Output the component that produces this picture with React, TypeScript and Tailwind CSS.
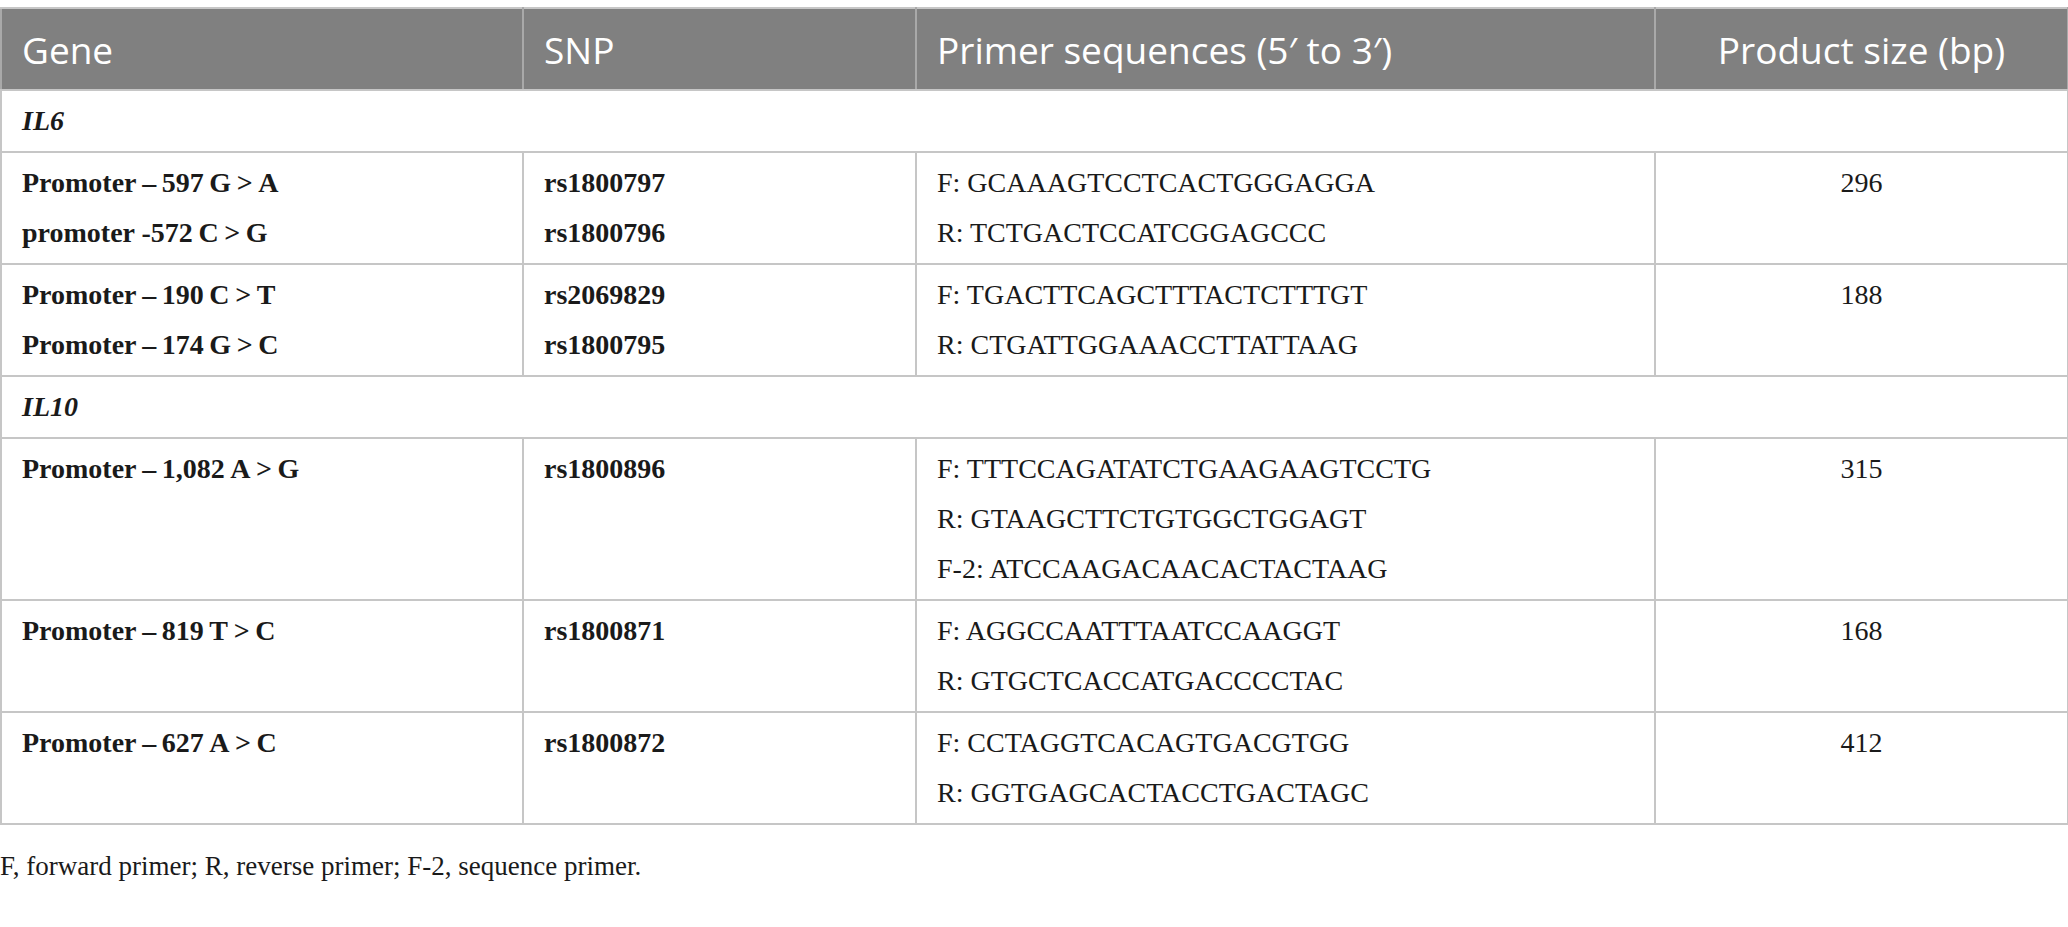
import React from "react";

const serif = "font-['Liberation_Serif','Times_New_Roman',serif]";

type Row = { gene: string[]; snp: string[]; primers: string[]; size: string };

const T = "\u2009";

const il6: Row[] = [
  {
    gene: [`Promoter${T}–${T}597${T}G${T}>${T}A`, `promoter -572${T}C${T}>${T}G`],
    snp: ["rs1800797", "rs1800796"],
    primers: ["F: GCAAAGTCCTCACTGGGAGGA", "R: TCTGACTCCATCGGAGCCC"],
    size: "296",
  },
  {
    gene: [`Promoter${T}–${T}190${T}C${T}>${T}T`, `Promoter${T}–${T}174${T}G${T}>${T}C`],
    snp: ["rs2069829", "rs1800795"],
    primers: ["F: TGACTTCAGCTTTACTCTTTGT", "R: CTGATTGGAAACCTTATTAAG"],
    size: "188",
  },
];

const il10: Row[] = [
  {
    gene: [`Promoter${T}–${T}1,082 A${T}>${T}G`],
    snp: ["rs1800896"],
    primers: ["F: TTTCCAGATATCTGAAGAAGTCCTG", "R: GTAAGCTTCTGTGGCTGGAGT", "F-2: ATCCAAGACAACACTACTAAG"],
    size: "315",
  },
  {
    gene: [`Promoter${T}–${T}819${T}T${T}>${T}C`],
    snp: ["rs1800871"],
    primers: ["F: AGGCCAATTTAATCCAAGGT", "R: GTGCTCACCATGACCCCTAC"],
    size: "168",
  },
  {
    gene: [`Promoter${T}–${T}627 A${T}>${T}C`],
    snp: ["rs1800872"],
    primers: ["F: CCTAGGTCACAGTGACGTGG", "R: GGTGAGCACTACCTGACTAGC"],
    size: "412",
  },
];

function Lines({ items }: { items: string[] }) {
  return (
    <>
      {items.map((t, i) => (
        <div key={i} className="whitespace-nowrap">
          {t}
        </div>
      ))}
    </>
  );
}

function DataRow({ r }: { r: Row }) {
  const td = "border-2 border-[#c6c6c6] align-top px-[20px] py-[5px]";
  return (
    <tr>
      <td className={`${td} font-bold`}>
        <Lines items={r.gene} />
      </td>
      <td className={`${td} font-bold`}>
        <Lines items={r.snp} />
      </td>
      <td className={td}>
        <Lines items={r.primers} />
      </td>
      <td className={`${td} text-center`}>{r.size}</td>
    </tr>
  );
}

function Section({ name }: { name: string }) {
  return (
    <tr>
      <td colSpan={4} className="border-2 border-[#c6c6c6] px-[20px] py-[5px] font-bold italic">
        {name}
      </td>
    </tr>
  );
}

export default function App() {
  const th =
    "border-2 border-[#c6c6c6] border-x-[#a9a9a9] bg-[#808080] text-white font-normal px-[20px] pt-[16px] pb-[14px] text-[37px] leading-[50px] font-['Open_Sans','Noto_Sans',sans-serif]";
  return (
    <div className="min-h-screen bg-white pt-[7px]">
      <table
        className={`w-[2067px] table-fixed border-collapse text-[28px] leading-[50px] text-[#1a1a1a] ${serif}`}
      >
        <colgroup>
          <col className="w-[522px]" />
          <col className="w-[393px]" />
          <col className="w-[739px]" />
          <col className="w-[413px]" />
        </colgroup>
        <thead>
          <tr>
            <th className={`${th} text-left`}>Gene</th>
            <th className={`${th} text-left`}>SNP</th>
            <th className={`${th} text-left`}>Primer sequences (5′ to 3′)</th>
            <th className={`${th} text-center`}>Product size (bp)</th>
          </tr>
        </thead>
        <tbody>
          <Section name="IL6" />
          {il6.map((r, i) => (
            <DataRow key={i} r={r} />
          ))}
          <Section name="IL10" />
          {il10.map((r, i) => (
            <DataRow key={i} r={r} />
          ))}
        </tbody>
      </table>
      <p className={`mt-[23px] text-[27px] leading-[36px] text-[#1a1a1a] ${serif}`}>
        F, forward primer; R, reverse primer; F-2, sequence primer.
      </p>
    </div>
  );
}
